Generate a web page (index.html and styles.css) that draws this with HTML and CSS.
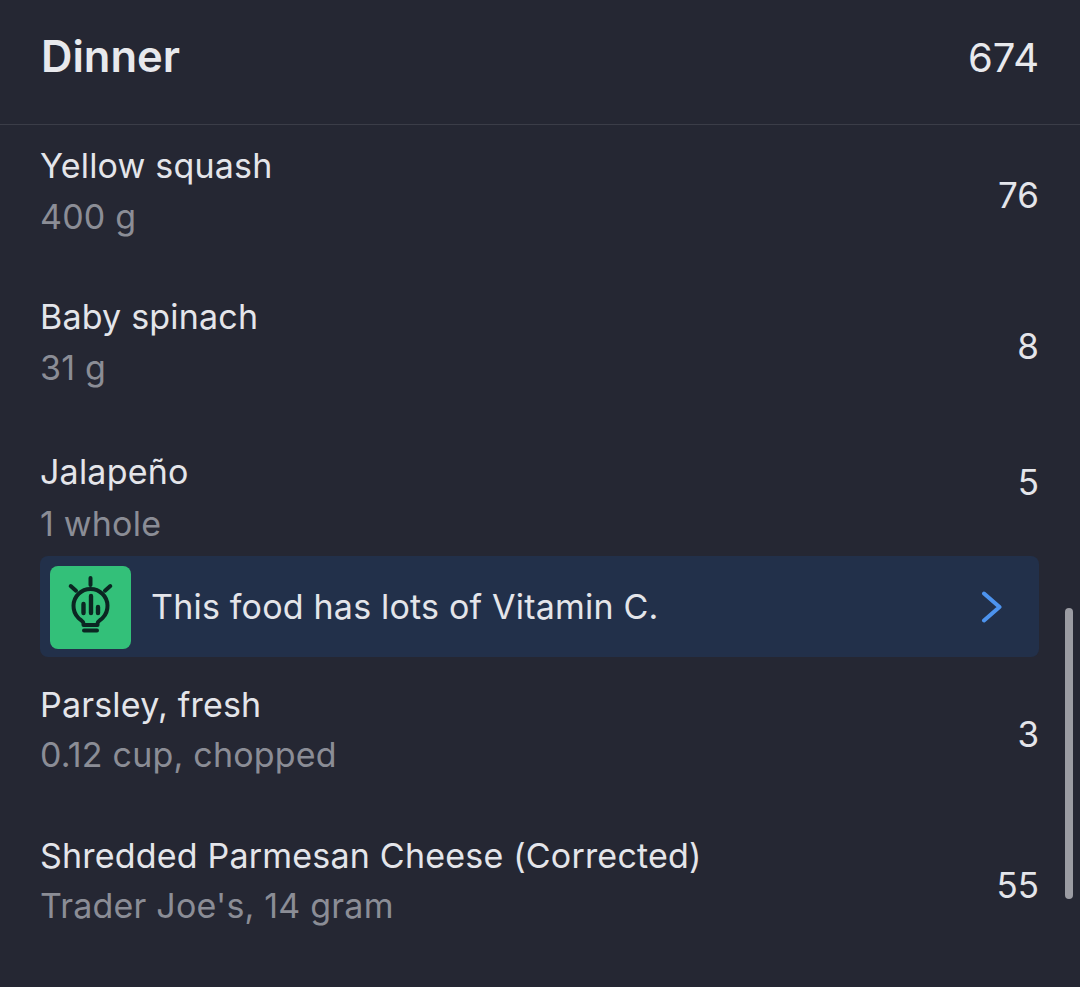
FILE: index.html
```html
<!DOCTYPE html>
<html lang="en">
<head>
<meta charset="utf-8">
<title>Dinner</title>
<link rel="stylesheet" href="styles.css">
</head>
<body>
<main class="screen">
  <header class="meal-header">
    <h1 class="meal-title">Dinner</h1>
    <span class="meal-total">674</span>
  </header>
  <ul class="food-list">
    <li class="food">
      <div class="food-text"><span class="food-name">Yellow squash</span><span class="food-amount food-amount-mid">400 g</span></div>
      <span class="food-cal">76</span>
    </li>
    <li class="food">
      <div class="food-text"><span class="food-name">Baby spinach</span><span class="food-amount food-amount-mid">31 g</span></div>
      <span class="food-cal">8</span>
    </li>
    <li class="food food-tip-row">
      <div class="food-text"><span class="food-name">Jalapeño</span><span class="food-amount food-amount-wide">1 whole</span></div>
      <span class="food-cal">5</span>
    </li>
    <li class="tip">
      <span class="tip-icon">
        <svg viewBox="0 0 81 83" width="81" height="83" fill="none" stroke="#0b2622" stroke-width="4" stroke-linecap="round" stroke-linejoin="round">
          <path d="M40.500 12v7M20.700 20l5.300 4.700M60.300 20l-5.300 4.700"/>
          <path d="M33.500 59v-1.500c0-2.500-3.500-3.500-5.500-6a17 17 0 1 1 25 0c-2 2.500-5.500 3.500-5.500 6v1.500z"/>
          <path d="M34 64.500h13"/>
          <path d="M41 30v17M33.500 38v9M48 41v6" stroke-width="4.400"/>
        </svg>
      </span>
      <span class="tip-text">This food has lots of Vitamin C.</span>
      <svg class="tip-chevron" viewBox="0 0 22 32" width="22" height="32" fill="none" stroke="#4d93ee" stroke-width="4" stroke-linecap="round" stroke-linejoin="round">
        <path d="M3 2.500 18.500 16 3 29.500"/>
      </svg>
    </li>
    <li class="food food-after-tip">
      <div class="food-text"><span class="food-name">Parsley, fresh</span><span class="food-amount">0.12 cup, chopped</span></div>
      <span class="food-cal">3</span>
    </li>
    <li class="food">
      <div class="food-text"><span class="food-name">Shredded Parmesan Cheese (Corrected)</span><span class="food-amount">Trader Joe's, 14 gram</span></div>
      <span class="food-cal">55</span>
    </li>
  </ul>
  <div class="scroll-thumb"></div>
</main>
</body>
</html>
```
FILE: styles.css
```css
* { box-sizing: border-box; }
html, body { margin: 0; padding: 0; }
body {
  background: #252733;
  font-family: Inter, "Liberation Sans", sans-serif;
  color: #e6e7ec;
}
.screen {
  position: relative;
  width: 1080px;
  height: 987px;
  overflow: hidden;
  background: #252733;
}
.meal-header {
  height: 125px;
  padding: 0 41px 12px 41px;
  display: flex;
  align-items: center;
  justify-content: space-between;
  border-bottom: 1px solid #3b3d48;
}
.meal-title {
  margin: 0;
  font-size: 43.500px;
  line-height: 50px;
  font-weight: 600;
  color: #e8e9ed;
}
.meal-total {
  margin-top: 4px;
  font-size: 40px;
  line-height: 50px;
  font-weight: 400;
  color: #e8e9ed;
}
.food-list {
  list-style: none;
  margin: 0;
  padding: 0 41px 0 40px;
}
.food {
  height: 151px;
  padding-top: 21px;
  display: flex;
  justify-content: space-between;
}
.food-tip-row { height: 127px; padding-top: 23px; margin-top: 2px; }
.food-after-tip { height: 150px; margin-top: 8px; padding-top: 20px; }
.food-text { display: flex; flex-direction: column; }
.food-name {
  font-size: 34px;
  letter-spacing: 0.2px;
  line-height: 40px;
  color: #e4e5ea;
}
.food-amount {
  margin-top: 10px;
  font-size: 34px;
  letter-spacing: 0.2px;
  line-height: 40px;
  color: #8b8d96;
}
.food-amount-mid { margin-top: 11px; }
.food-amount-wide { margin-top: 12px; }
.food-cal {
  font-size: 35px;
  line-height: 40px;
  margin-top: 29px;
  color: #e4e5ea;
}
.food-tip-row .food-cal { margin-top: 10px; }
.tip {
  height: 101px;
  padding: 1px 36px 0 10px;
  display: flex;
  align-items: center;
  border-radius: 8px;
  background: #22304a;
}
.tip-icon {
  width: 81px;
  height: 83px;
  flex: none;
  border-radius: 8px;
  background: #33c079;
  display: flex;
  align-items: center;
  justify-content: center;
}
.tip-text {
  flex: 1;
  margin-left: 20px;
  font-size: 34px;
  letter-spacing: 0.2px;
  line-height: 40px;
  color: #e4e5ea;
}
.tip-chevron { flex: none; }
.scroll-thumb {
  position: absolute;
  left: 1065px;
  top: 608px;
  width: 8px;
  height: 291px;
  border-radius: 4px;
  background: #9b9ca3;
}
```
